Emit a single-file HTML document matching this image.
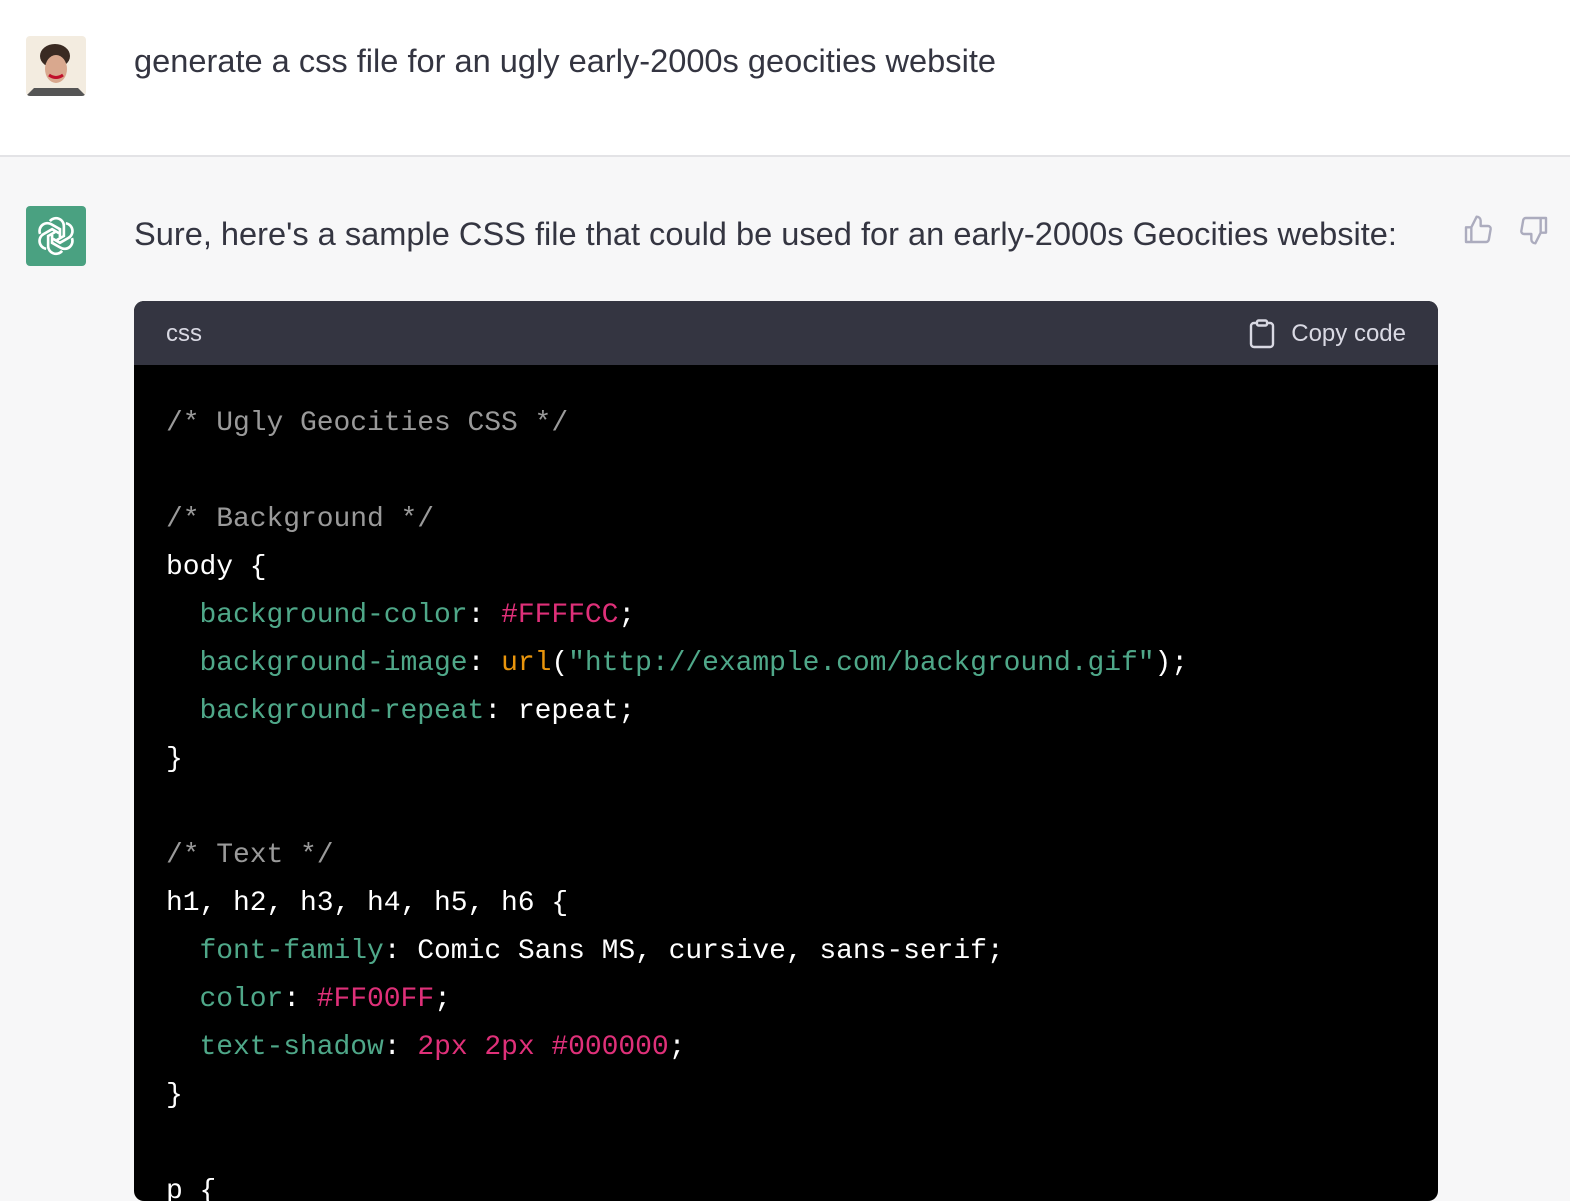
<!DOCTYPE html>
<html><head><meta charset="utf-8"><style>
*{margin:0;padding:0;box-sizing:border-box}
body{width:1570px;height:1194px;overflow:hidden;background:#f7f7f8;font-family:"Liberation Sans",sans-serif;color:#343541;position:relative}
.top{position:absolute;left:0;top:0;width:1570px;height:157px;background:#fff;border-bottom:2px solid #e3e3e6}
.av{position:absolute;left:26px;top:36px;width:60px;height:60px;border-radius:4px;overflow:hidden}
.msg{position:absolute;left:134px;font-size:32.6px;white-space:nowrap}
.gpt{position:absolute;left:26px;top:206px;width:60px;height:60px;border-radius:4px;background:#4aa181;display:flex;align-items:center;justify-content:center}
.code{position:absolute;left:134px;top:301px;width:1304px;height:900px;border-radius:10px;overflow:hidden;background:#000}
.hd{height:64px;background:#343541;color:#d9d9e3;font-size:24px;position:relative}
.hd .l{position:absolute;left:32px;top:19px}
.hd .r{position:absolute;right:32px;top:18px;display:flex;align-items:center;gap:16px}
pre{font-family:"Liberation Mono",monospace;font-size:28px;line-height:48px;color:#fff;padding:35px 32px;letter-spacing:-0.05px}
.c{color:#9a9a9a}.g{color:#4fa889}.p{color:#df3079}.o{color:#e9950c}
</style></head><body>
<div class="top"></div>
<div class="av"><svg width="60" height="60"><rect width="60" height="60" fill="#f3ece0"/><ellipse cx="29" cy="20" rx="15" ry="12" fill="#3a2a22"/><ellipse cx="30" cy="33" rx="11" ry="14" fill="#d9a88e"/><path d="M23 39 q7 5 14 0" stroke="#c0102a" stroke-width="3" fill="none"/><path d="M0 60 L8 52 H52 L60 60Z" fill="#555"/></svg></div>
<div class="msg" style="top:42px">generate a css file for an ugly early-2000s geocities website</div>
<div class="gpt"><svg width="42" height="42" viewBox="0 0 24 24" fill="none" stroke="#fff" stroke-width="1.5"><g transform="translate(12 12)"><g id="p"><path d="M-3.5 -8.5 a4.5 4.5 0 0 1 8 3 v5.5 l-4 2.3"/></g><use href="#p" transform="rotate(60)"/><use href="#p" transform="rotate(120)"/><use href="#p" transform="rotate(180)"/><use href="#p" transform="rotate(240)"/><use href="#p" transform="rotate(300)"/></g></svg></div>
<div class="msg" style="top:215px">Sure, here's a sample CSS file that could be used for an early-2000s Geocities website:</div>
<svg style="position:absolute;left:1462px;top:214px" width="32" height="32" viewBox="0 0 24 24" fill="none" stroke="#acacbe" stroke-width="1.8" stroke-linejoin="round"><path d="M7 10v11H3V10h4zm0 0l4-8a3 3 0 0 1 3 3v4h5.5a2 2 0 0 1 2 2.3l-1.4 8a2 2 0 0 1-2 1.7H7"/></svg>
<svg style="position:absolute;left:1518px;top:214px" width="32" height="32" viewBox="0 0 24 24" fill="none" stroke="#acacbe" stroke-width="1.8" stroke-linejoin="round"><path d="M17 14V3h4v11h-4zm0 0l-4 8a3 3 0 0 1-3-3v-4H4.5a2 2 0 0 1-2-2.3l1.4-8A2 2 0 0 1 5.9 3H17"/></svg>
<div class="code">
<div class="hd"><span class="l">css</span><span class="r"><svg width="26" height="30" viewBox="0 0 26 30" fill="none" stroke="#d9d9e3" stroke-width="2.4"><rect x="2" y="4" width="22" height="24" rx="3"/><rect x="8" y="1.5" width="10" height="5" rx="1.5" fill="#343541"/></svg>Copy code</span></div>
<pre><span class="c">/* Ugly Geocities CSS */</span>

<span class="c">/* Background */</span>
body {
  <span class="g">background-color</span>: <span class="p">#FFFFCC</span>;
  <span class="g">background-image</span>: <span class="o">url</span>(<span class="g">"http://example.com/background.gif"</span>);
  <span class="g">background-repeat</span>: repeat;
}

<span class="c">/* Text */</span>
h1, h2, h3, h4, h5, h6 {
  <span class="g">font-family</span>: Comic Sans MS, cursive, sans-serif;
  <span class="g">color</span>: <span class="p">#FF00FF</span>;
  <span class="g">text-shadow</span>: <span class="p">2px</span> <span class="p">2px</span> <span class="p">#000000</span>;
}

p {</pre>
</div>
</body></html>
